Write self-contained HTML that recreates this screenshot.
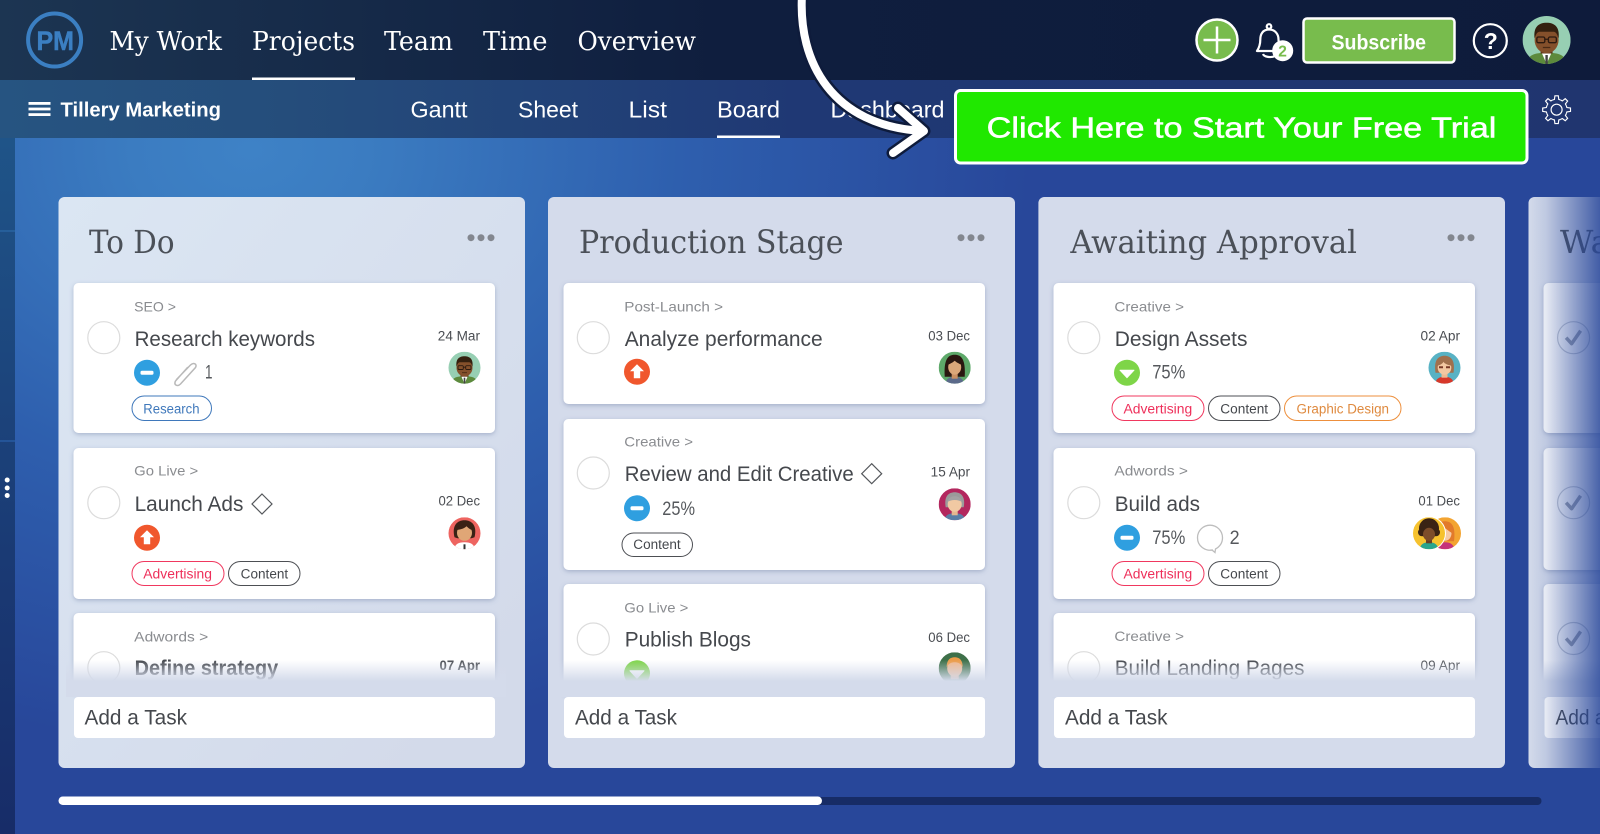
<!DOCTYPE html>
<html><head><meta charset="utf-8"><title>Board</title>
<style>
html,body{margin:0;padding:0;background:#28479a;width:1600px;height:834px;overflow:hidden}
svg{display:block}
text{font-family:"Liberation Sans",sans-serif}
.n{font-family:"DejaVu Serif","Liberation Serif",serif;font-size:26px;fill:#fff}
.s{font-size:23px;fill:#fff}
.h{font-family:"DejaVu Serif","Liberation Serif",serif;font-size:31.500px;fill:#4b5058}
.p{font-size:14px;fill:#8a8c90}
.t{font-size:21px;fill:#45484d}
.d{font-size:13.5px;fill:#4a4d52}
.k{font-size:19px;fill:#55585c}
.g{font-size:13.5px}
.a{font-size:21.5px;fill:#45484d}
.c{fill:none;stroke:#dcdcdc;stroke-width:1.2}
.card{fill:#fff;filter:url(#sh)}
</style></head><body>
<svg xmlns="http://www.w3.org/2000/svg" width="1600" height="834" viewBox="0 0 1600 834">
<defs>
<radialGradient id="bg" gradientUnits="userSpaceOnUse" cx="250" cy="150" r="600" gradientTransform="translate(250 150) scale(1.3 1) translate(-250 -150)"><stop offset="0" stop-color="#3e82c6"/><stop offset=".15" stop-color="#3b7cc1"/><stop offset=".55" stop-color="#2e5fae"/><stop offset="1" stop-color="#28479a"/></radialGradient>
<linearGradient id="hd" x1="0" x2="1" y1="0" y2="0"><stop offset="0" stop-color="#1c3552"/><stop offset=".45" stop-color="#0f1e3e"/><stop offset="1" stop-color="#0e1b3b"/></linearGradient>
<linearGradient id="sb" x1="0" x2="1" y1="0" y2="0"><stop offset="0" stop-color="#265481"/><stop offset=".18" stop-color="#254d7b"/><stop offset=".5" stop-color="#1f3874"/><stop offset="1" stop-color="#20356f"/></linearGradient>
<linearGradient id="st" x1="0" x2="0" y1="0" y2="1"><stop offset="0" stop-color="#1f5488"/><stop offset=".6" stop-color="#1a3a74"/><stop offset="1" stop-color="#172c68"/></linearGradient>
<linearGradient id="col" gradientUnits="userSpaceOnUse" x1="60" y1="197" x2="560" y2="600"><stop offset="0" stop-color="#dbe6f3"/><stop offset="1" stop-color="#d3daea"/></linearGradient>
<linearGradient id="fade" x1="0" x2="0" y1="0" y2="1"><stop offset="0" stop-color="#d4dbeb" stop-opacity="0"/><stop offset="1" stop-color="#d4dbeb"/></linearGradient>
<linearGradient id="ov" x1="0" x2="1" y1="0" y2="0"><stop offset="0" stop-color="#28479a" stop-opacity="0"/><stop offset=".25" stop-color="#28479a" stop-opacity=".12"/><stop offset="1" stop-color="#28479a" stop-opacity=".85"/></linearGradient>
<filter id="sh" x="-5%" y="-10%" width="110%" height="125%"><feDropShadow dx="0" dy="1.5" stdDeviation="2.5" flood-color="#5d6e98" flood-opacity=".4"/></filter>
<clipPath id="ci"><circle r="16"/></clipPath>

<g id="bm"><circle r="13" fill="#2f9fe0"/><rect x="-6.5" y="-2" width="13" height="4" rx="1.5" fill="#fff"/></g>
<g id="ru"><circle r="13" fill="#f0572d"/><path d="M0-7.5L7-.5H3.2V6.5H-3.2V-.5H-7Z" fill="#fff"/></g>
<g id="gd"><circle r="13" fill="#7ed548"/><path d="M-7-2.5H7L0 5Z" fill="#fff" stroke="#fff" stroke-linejoin="round"/></g>

<g id="av1" clip-path="url(#ci)"><rect x="-16" y="-16" width="32" height="32" fill="#97cfb3"/><path d="M-13 16c0-6 5-7.500 13-7.500s13 1.500 13 7.500z" fill="#5d8a3c"/><path d="M-3.500 8L0 16 3.500 8z" fill="#fff"/><rect x="-.8" y="10" width="1.600" height="6" fill="#444"/><rect x="-4" y="3" width="8" height="6" fill="#5e371d"/><ellipse cy="0" rx="8" ry="8.800" fill="#84502b"/><path d="M-8-1C-9-9-5-11.500 0-11.500S9-9 8-1C7-4 6.500-5 5-5.500H-5C-6.500-5-7-4-8-1z" fill="#34200f"/><g fill="none" stroke="#2c1a10" stroke-width=".9"><rect x="-6.500" y="-2" width="5.300" height="3.800" rx="1"/><rect x="1.200" y="-2" width="5.300" height="3.800" rx="1"/><path d="M-1.200-.5H1.200"/></g><path d="M-2.500 5h5" stroke="#4a2a15" stroke-width=".8"/></g>
<g id="av2" clip-path="url(#ci)"><rect x="-16" y="-16" width="32" height="32" fill="#ee6460"/><path d="M-10 16c0-5 4-7 10-7s10 2 10 7z" fill="#fff"/><path d="M-10 4C-13-8-7-13 0-13S13-8 10 4L7 5H-7z" fill="#3a2115"/><ellipse cy="-.5" rx="7.500" ry="8" fill="#e0a676"/><path d="M-8-3C-7-8-3-9 0-9S7-8 8-3C5-4 3-6 2-7-1-4-5-4-8-3z" fill="#3a2115"/><rect x="-1" y="11" width="2" height="5" fill="#333"/></g>
<g id="av3" clip-path="url(#ci)"><rect x="-16" y="-16" width="32" height="32" fill="#5ea96a"/><path d="M-10 9C-11-8-7-13 0-13S11-8 10 9z" fill="#2a1710"/><path d="M-9 16c0-5 4-7 9-7s9 2 9 7z" fill="#5b6a8a"/><rect x="-3" y="4" width="6" height="7" fill="#c98f62"/><ellipse cy="-.5" rx="6.500" ry="7.500" fill="#dba779"/><path d="M-7-3C-6-8-2-9 0-9S6-8 7-3C4-4 1-6 0-7-1-6-4-4-7-3z" fill="#2a1710"/></g>
<g id="av4" clip-path="url(#ci)"><rect x="-16" y="-16" width="32" height="32" fill="#b3275e"/><path d="M-10 16c0-5 4-7 10-7s10 2 10 7z" fill="#5a7ea6"/><rect x="-3" y="4" width="6" height="7" fill="#e7b78f"/><path d="M-9 3C-11-8-6-12 0-12S11-8 9 3z" fill="#9b9b9b"/><ellipse cy="0" rx="7" ry="7.500" fill="#f1c9a3"/><path d="M-7.500-2C-6-7-3-8 0-8S6-7 7.500-2C4-5-4-5-7.500-2z" fill="#a3a3a3"/></g>
<g id="av5" clip-path="url(#ci)"><rect x="-16" y="-16" width="32" height="32" fill="#58b2c4"/><path d="M-9 16c0-5 4-7 9-7s9 2 9 7z" fill="#d7382a"/><rect x="-3" y="4" width="6" height="6" fill="#eeba92"/><path d="M-9 5C-11-8-6-12 0-12S11-8 9 5z" fill="#a1704d"/><ellipse cy="0" rx="6.800" ry="7" fill="#f3c7a1"/><path d="M-7-2C-6-7-2-8 0-8S6-7 7-2C3-3 0-4-1-6-2-4-4-3-7-2z" fill="#a1704d"/><path d="M-5.500-.5h4M1.500-.5h4" stroke="#7a3a28" stroke-width="2"/></g>
<g id="av6" clip-path="url(#ci)"><rect x="-16" y="-16" width="32" height="32" fill="#3e7049"/><rect x="-4" y="4" width="8" height="7" fill="#e5a97c"/><ellipse cy="0" rx="7.500" ry="8.500" fill="#f1b78c"/><path d="M-8-1C-8-9-4-11 0-11S8-9 8-1C6-5 3-6 0-6S-6-5-8-1z" fill="#ec9c48"/></g>
<g id="av7" clip-path="url(#ci)"><rect x="-16" y="-16" width="32" height="32" fill="#f6c22e"/><path d="M-9 16c0-5 4-7 9-7s9 2 9 7z" fill="#29a58c"/><circle cy="-5" r="10" fill="#3a2314"/><circle cx="-7" cy="-1" r="4" fill="#3a2314"/><circle cx="7" cy="-1" r="4" fill="#3a2314"/><rect x="-3" y="3" width="6" height="7" fill="#6b3f22"/><ellipse cy="1" rx="6" ry="6.500" fill="#7d4d2a"/></g>
<g id="av8" clip-path="url(#ci)"><rect x="-16" y="-16" width="32" height="32" fill="#f3a431"/><path d="M-9 16c0-5 4-7 9-7s9 2 9 7z" fill="#c5347a"/><path d="M-9 8C-11-8-6-12 0-12S11-8 9 8z" fill="#e27a2b"/><ellipse cy="0" rx="6.500" ry="7.500" fill="#f6cba6"/><path d="M-7-2C-6-8-2-8 0-8S6-7 7 0C3-3 0-5-1-6-3-4-5-3-7-2z" fill="#e27a2b"/></g>
<g id="ck"><circle r="16" fill="none" stroke="#c6cbd4" stroke-width="1.2"/><path d="M-7.500 0L-2 6 7-7" fill="none" stroke="#9aa0ad" stroke-width="3.500" stroke-linejoin="round"/></g>
<path id="to" d="M-4.020-9.700L-2.180-10.270-1.700-13.900H1.700L2.180-10.270 4.020-9.700"/>
</defs>

<rect width="1600" height="834" fill="url(#bg)"/>
<rect y="138" width="15" height="696" fill="url(#st)"/>
<rect y="230.500" width="15" height="1" fill="#2f6fb0"/><rect y="440.500" width="15" height="1" fill="#2d68b6"/>
<circle cx="7.200" cy="480" r="2.500" fill="#fff"/><circle cx="7.200" cy="488" r="2.500" fill="#fff"/><circle cx="7.200" cy="495.500" r="2.500" fill="#fff"/>

<!-- header -->
<rect width="1600" height="80" fill="url(#hd)"/>
<circle cx="54.600" cy="40" r="26.500" fill="none" stroke="#3b7fc2" stroke-width="4"/>
<text x="36.500" y="50" font-size="27" font-weight="bold" fill="#3b7fc2" stroke="#3b7fc2" stroke-width=".5" textLength="37.500" lengthAdjust="spacingAndGlyphs">PM</text>
<text class="n" x="109.500" y="50" textLength="112.500" lengthAdjust="spacingAndGlyphs">My Work</text>
<text class="n" x="252" y="50" textLength="103" lengthAdjust="spacingAndGlyphs">Projects</text>
<text class="n" x="384" y="50" textLength="69" lengthAdjust="spacingAndGlyphs">Team</text>
<text class="n" x="483" y="50" textLength="64.500" lengthAdjust="spacingAndGlyphs">Time</text>
<text class="n" x="577.500" y="50" textLength="118.500" lengthAdjust="spacingAndGlyphs">Overview</text>
<rect x="252" y="77.500" width="103" height="2.500" fill="#fff"/>

<circle cx="1217" cy="40" r="20.500" fill="#78bc4d" stroke="#fff" stroke-width="2.500"/>
<path d="M1203.500 40h27M1217 26.500v27" stroke="#fff" stroke-width="2.500"/>
<g fill="none" stroke="#fff" stroke-width="2.200" stroke-linejoin="round">
<path d="M1269 29.500c-6 0-8.700 4.500-8.700 10 0 5-1 8-3.300 11.500h25c-2.300-3.500-3.500-6.500-3.500-11.500 0-5.500-3.500-10-9.500-10z"/>
<circle cx="1269" cy="26.500" r="2.300"/><path d="M1263 54c1 3 8 4 12 2"/></g>
<circle cx="1282.700" cy="50.700" r="10.500" fill="#fff"/>
<text x="1278.300" y="56.300" font-size="15.500" font-weight="bold" fill="#78bc4d">2</text>
<rect x="1303.500" y="18.500" width="151" height="44" rx="3.500" fill="#78bc4d" stroke="#fff" stroke-width="2.500"/>
<text x="1331.500" y="49.300" font-size="21.500" font-weight="bold" fill="#fff" textLength="94.500" lengthAdjust="spacingAndGlyphs">Subscribe</text>
<circle cx="1490.300" cy="40.700" r="16.500" fill="none" stroke="#fff" stroke-width="2.200"/>
<text x="1483.700" y="49" font-size="23" font-weight="bold" fill="#fff">?</text>
<g transform="translate(1546.600 40) scale(1.500)"><use href="#av1"/></g>

<!-- subnav -->
<rect y="80" width="1600" height="58" fill="url(#sb)"/>
<rect x="28.500" y="102" width="22" height="2.800" fill="#fff"/><rect x="28.500" y="107.600" width="22" height="2.800" fill="#fff"/><rect x="28.500" y="113.200" width="22" height="2.800" fill="#fff"/>
<text x="60.500" y="116.500" font-size="20.500" font-weight="bold" fill="#fff" textLength="160.500" lengthAdjust="spacingAndGlyphs">Tillery Marketing</text>
<text class="s" x="410.500" y="117.300" textLength="57" lengthAdjust="spacingAndGlyphs">Gantt</text>
<text class="s" x="518" y="117.300" textLength="60" lengthAdjust="spacingAndGlyphs">Sheet</text>
<text class="s" x="628.500" y="117.300" textLength="38.500" lengthAdjust="spacingAndGlyphs">List</text>
<text class="s" x="717" y="117.300" textLength="63" lengthAdjust="spacingAndGlyphs">Board</text>
<rect x="717" y="135.500" width="63" height="2.500" fill="#fff"/>
<text class="s" x="830.500" y="117.300" textLength="114" lengthAdjust="spacingAndGlyphs">Dashboard</text>
<g transform="translate(1556.600 109.700)" fill="none" stroke="#fff" stroke-width="1.150"><circle r="5.500"/>
<use href="#to"/><use href="#to" transform="rotate(45)"/><use href="#to" transform="rotate(90)"/><use href="#to" transform="rotate(135)"/><use href="#to" transform="rotate(180)"/><use href="#to" transform="rotate(225)"/><use href="#to" transform="rotate(270)"/><use href="#to" transform="rotate(315)"/></g>

<!-- column 1 -->
<rect x="58.500" y="197" width="466.500" height="571" rx="6" fill="url(#col)"/>
<text class="h" x="89" y="253" textLength="85.500" lengthAdjust="spacingAndGlyphs">To Do</text>
<g fill="#83878f"><circle cx="471" cy="237.700" r="3.500"/><circle cx="481" cy="237.700" r="3.500"/><circle cx="491" cy="237.700" r="3.500"/></g>

<rect class="card" x="73.500" y="283" width="421.500" height="150" rx="5"/>
<text class="p" x="134.200" y="311.700" textLength="41.800" lengthAdjust="spacingAndGlyphs">SEO &gt;</text>
<circle class="c" cx="103.800" cy="337.700" r="16"/>
<text class="t" x="134.600" y="346" textLength="180.400" lengthAdjust="spacingAndGlyphs">Research keywords</text>
<text class="d" x="437.800" y="340.700" textLength="42.200" lengthAdjust="spacingAndGlyphs">24 Mar</text>
<use href="#av1" x="464.500" y="367.700"/>
<use href="#bm" x="147" y="372.700"/>
<path d="M176.500 378.500l14-14.500c3-3 7-1 5 2.500l-15 16.500c-3 3-7 1-5-3l12-13.500" fill="none" stroke="#b9b9b9" stroke-width="1.500" stroke-linecap="round" transform="translate(0 1)"/>
<text class="k" x="205" y="378.700" textLength="7.500" lengthAdjust="spacingAndGlyphs">1</text>
<rect x="132" y="396" width="79.500" height="24.500" rx="12.250" fill="#fff" stroke="#3f78bb" stroke-width="1"/>
<text class="g" x="143.300" y="413.300" fill="#3f78bb" textLength="56.200" lengthAdjust="spacingAndGlyphs">Research</text>

<rect class="card" x="73.500" y="448" width="421.500" height="151" rx="5"/>
<text class="p" x="134.200" y="475.700" textLength="64" lengthAdjust="spacingAndGlyphs">Go Live &gt;</text>
<circle class="c" cx="103.800" cy="502.700" r="16"/>
<text class="t" x="134.600" y="511" textLength="108.800" lengthAdjust="spacingAndGlyphs">Launch Ads</text>
<path d="M262 494l10 10-10 10-10-10z" fill="none" stroke="#55585c" stroke-width="1.200"/>
<text class="d" x="438.500" y="505.300" textLength="41.500" lengthAdjust="spacingAndGlyphs">02 Dec</text>
<use href="#av2" x="464.500" y="533.300"/>
<use href="#ru" x="147" y="537.700"/>
<rect x="132" y="561.500" width="92" height="24" rx="12" fill="#fff" stroke="#f0385f" stroke-width="1"/>
<text class="g" x="143.300" y="578.300" fill="#ee2f5a" textLength="68.700" lengthAdjust="spacingAndGlyphs">Advertising</text>
<rect x="228.500" y="561.500" width="71.500" height="24" rx="12" fill="#fff" stroke="#4d4f54" stroke-width="1"/>
<text class="g" x="240.700" y="578.300" fill="#45484d" textLength="47.500" lengthAdjust="spacingAndGlyphs">Content</text>

<rect class="card" x="73.500" y="613" width="421.500" height="80" rx="5"/>
<text class="p" x="134.200" y="641.700" textLength="74" lengthAdjust="spacingAndGlyphs">Adwords &gt;</text>
<circle class="c" cx="103.800" cy="667.700" r="16"/>
<text class="t" x="134.600" y="675" font-weight="bold" textLength="143.600" lengthAdjust="spacingAndGlyphs">Define strategy</text>
<text class="d" x="439.500" y="670" font-weight="bold" textLength="40.500" lengthAdjust="spacingAndGlyphs">07 Apr</text>
<rect x="66" y="660" width="440" height="21" fill="url(#fade)"/><rect x="66" y="681" width="440" height="16" fill="#d4dbeb"/>
<rect x="74" y="697" width="421" height="41" rx="4" fill="#fff"/>
<text class="a" x="84.500" y="724.700" textLength="102.500" lengthAdjust="spacingAndGlyphs">Add a Task</text>

<!-- column 2 -->
<rect x="548" y="197" width="467" height="571" rx="6" fill="#d4dbeb"/>
<text class="h" x="579" y="253" textLength="264.500" lengthAdjust="spacingAndGlyphs">Production Stage</text>
<g fill="#83878f"><circle cx="961" cy="237.700" r="3.500"/><circle cx="971" cy="237.700" r="3.500"/><circle cx="981" cy="237.700" r="3.500"/></g>

<rect class="card" x="563.500" y="283" width="421.500" height="121" rx="5"/>
<text class="p" x="624.300" y="311.700" textLength="98.700" lengthAdjust="spacingAndGlyphs">Post-Launch &gt;</text>
<circle class="c" cx="593.300" cy="337.700" r="16"/>
<text class="t" x="624.700" y="346" textLength="198" lengthAdjust="spacingAndGlyphs">Analyze performance</text>
<text class="d" x="928.300" y="340.700" textLength="41.700" lengthAdjust="spacingAndGlyphs">03 Dec</text>
<use href="#av3" x="954.700" y="367.700"/>
<use href="#ru" x="637" y="371.700"/>

<rect class="card" x="563.500" y="419" width="421.500" height="151" rx="5"/>
<text class="p" x="624.300" y="446.700" textLength="68.700" lengthAdjust="spacingAndGlyphs">Creative &gt;</text>
<circle class="c" cx="593.300" cy="473" r="16"/>
<text class="t" x="624.700" y="481" textLength="229" lengthAdjust="spacingAndGlyphs">Review and Edit Creative</text>
<path d="M871.700 463.700l10 10-10 10-10-10z" fill="none" stroke="#55585c" stroke-width="1.200"/>
<text class="d" x="930.700" y="476.300" textLength="39.300" lengthAdjust="spacingAndGlyphs">15 Apr</text>
<use href="#av4" x="954.700" y="504.300"/>
<use href="#bm" x="637" y="508.300"/>
<text class="k" x="662.300" y="515" textLength="32.700" lengthAdjust="spacingAndGlyphs">25%</text>
<rect x="622" y="533" width="70.500" height="23.500" rx="11.750" fill="#fff" stroke="#4d4f54" stroke-width="1"/>
<text class="g" x="633.300" y="549" fill="#45484d" textLength="47.400" lengthAdjust="spacingAndGlyphs">Content</text>

<rect class="card" x="563.500" y="584" width="421.500" height="110" rx="5"/>
<text class="p" x="624.300" y="612.300" textLength="64" lengthAdjust="spacingAndGlyphs">Go Live &gt;</text>
<circle class="c" cx="593.300" cy="639" r="16"/>
<text class="t" x="624.700" y="646.700" textLength="126.300" lengthAdjust="spacingAndGlyphs">Publish Blogs</text>
<text class="d" x="928.300" y="642" textLength="41.700" lengthAdjust="spacingAndGlyphs">06 Dec</text>
<use href="#av6" x="954.700" y="668.300"/>
<use href="#gd" x="637" y="673.300"/>
<rect x="556" y="660" width="440" height="21" fill="url(#fade)"/><rect x="556" y="681" width="440" height="16" fill="#d4dbeb"/>
<rect x="564" y="697" width="421" height="41" rx="4" fill="#fff"/>
<text class="a" x="575" y="724.700" textLength="102" lengthAdjust="spacingAndGlyphs">Add a Task</text>

<!-- column 3 -->
<rect x="1038.400" y="197" width="466.600" height="571" rx="6" fill="#d4dbeb"/>
<text class="h" x="1070.400" y="253" textLength="286.600" lengthAdjust="spacingAndGlyphs">Awaiting Approval</text>
<g fill="#83878f"><circle cx="1451" cy="237.700" r="3.500"/><circle cx="1461" cy="237.700" r="3.500"/><circle cx="1471" cy="237.700" r="3.500"/></g>

<rect class="card" x="1053.500" y="283" width="421.500" height="150" rx="5"/>
<text class="p" x="1114.400" y="311.700" textLength="69.600" lengthAdjust="spacingAndGlyphs">Creative &gt;</text>
<circle class="c" cx="1083.800" cy="337.700" r="16"/>
<text class="t" x="1114.700" y="346" textLength="132.800" lengthAdjust="spacingAndGlyphs">Design Assets</text>
<text class="d" x="1420.500" y="340.700" textLength="39.500" lengthAdjust="spacingAndGlyphs">02 Apr</text>
<use href="#av5" x="1444.500" y="367.700"/>
<use href="#gd" x="1127" y="372.700"/>
<text class="k" x="1152.200" y="378.700" textLength="33.100" lengthAdjust="spacingAndGlyphs">75%</text>
<rect x="1112" y="396" width="92" height="24.500" rx="12.250" fill="#fff" stroke="#f0385f" stroke-width="1"/>
<text class="g" x="1123.500" y="413.300" fill="#ee2f5a" textLength="68.700" lengthAdjust="spacingAndGlyphs">Advertising</text>
<rect x="1208.500" y="396" width="71.500" height="24.500" rx="12.250" fill="#fff" stroke="#4d4f54" stroke-width="1"/>
<text class="g" x="1220.300" y="413.300" fill="#45484d" textLength="47.800" lengthAdjust="spacingAndGlyphs">Content</text>
<rect x="1284.500" y="396" width="116.500" height="24.500" rx="12.250" fill="#fff" stroke="#ed8f3c" stroke-width="1"/>
<text class="g" x="1296.500" y="413.300" fill="#df8a3f" textLength="92.500" lengthAdjust="spacingAndGlyphs">Graphic Design</text>

<rect class="card" x="1053.500" y="448" width="421.500" height="151" rx="5"/>
<text class="p" x="1114.400" y="475.700" textLength="73.600" lengthAdjust="spacingAndGlyphs">Adwords &gt;</text>
<circle class="c" cx="1083.800" cy="502.700" r="16"/>
<text class="t" x="1114.700" y="511" textLength="85.300" lengthAdjust="spacingAndGlyphs">Build ads</text>
<text class="d" x="1418.400" y="505.300" textLength="41.600" lengthAdjust="spacingAndGlyphs">01 Dec</text>
<use href="#av8" x="1445" y="533.300"/>
<circle cx="1429" cy="533.300" r="17" fill="#fff"/>
<use href="#av7" x="1429" y="533.300"/>
<use href="#bm" x="1127" y="537.700"/>
<text class="k" x="1152.200" y="544" textLength="33.100" lengthAdjust="spacingAndGlyphs">75%</text>
<path d="M1213 550c-8 1.500-15.500-4-15.500-12.300 0-7 5.700-12.500 12.500-12.500s12.500 5.500 12.500 12.500c0 5-3 9-7 11.300l-.5 3.500-3-2.500z" fill="none" stroke="#bdbdbd" stroke-width="1.300"/>
<text class="k" x="1229.600" y="544" textLength="10" lengthAdjust="spacingAndGlyphs">2</text>
<rect x="1112" y="561.500" width="92" height="24" rx="12" fill="#fff" stroke="#f0385f" stroke-width="1"/>
<text class="g" x="1123.500" y="578.300" fill="#ee2f5a" textLength="68.700" lengthAdjust="spacingAndGlyphs">Advertising</text>
<rect x="1208.500" y="561.500" width="71.500" height="24" rx="12" fill="#fff" stroke="#4d4f54" stroke-width="1"/>
<text class="g" x="1220.300" y="578.300" fill="#45484d" textLength="47.800" lengthAdjust="spacingAndGlyphs">Content</text>

<rect class="card" x="1053.500" y="613" width="421.500" height="80" rx="5"/>
<text class="p" x="1114.400" y="641" textLength="69.600" lengthAdjust="spacingAndGlyphs">Creative &gt;</text>
<circle class="c" cx="1083.800" cy="667.700" r="16"/>
<text class="t" x="1114.700" y="675" textLength="189.800" lengthAdjust="spacingAndGlyphs">Build Landing Pages</text>
<text class="d" x="1420.500" y="670" textLength="39.500" lengthAdjust="spacingAndGlyphs">09 Apr</text>
<rect x="1046" y="660" width="440" height="21" fill="url(#fade)"/><rect x="1046" y="681" width="440" height="16" fill="#d4dbeb"/>
<rect x="1054" y="697" width="421" height="41" rx="4" fill="#fff"/>
<text class="a" x="1065" y="724.700" textLength="102.500" lengthAdjust="spacingAndGlyphs">Add a Task</text>

<!-- column 4 -->
<rect x="1528.500" y="197" width="100" height="571" rx="6" fill="#d4dbeb"/>
<text class="h" x="1560" y="253" textLength="50" lengthAdjust="spacingAndGlyphs">Wa</text>
<rect class="card" x="1543.500" y="283" width="100" height="150" rx="5"/>
<use href="#ck" x="1573.600" y="337.700"/>
<rect class="card" x="1543.500" y="448" width="100" height="122" rx="5"/>
<use href="#ck" x="1573.600" y="502.700"/>
<rect class="card" x="1543.500" y="584" width="100" height="110" rx="5"/>
<use href="#ck" x="1573.600" y="638.500"/>
<rect x="1536" y="660" width="64" height="21" fill="url(#fade)"/><rect x="1536" y="681" width="64" height="16" fill="#d4dbeb"/>
<rect x="1544.500" y="697" width="100" height="41" rx="4" fill="#fff"/>
<text class="a" x="1555.500" y="724.700" textLength="50" lengthAdjust="spacingAndGlyphs">Add a</text>
<rect x="1528" y="197" width="72" height="571" fill="url(#ov)"/>

<!-- scrollbar -->
<rect x="58.500" y="797" width="1483" height="8" rx="4" fill="#172c66"/>
<rect x="58.500" y="796.500" width="763.500" height="8.500" rx="4.250" fill="#fff"/>

<!-- arrow -->
<g fill="none" stroke-linecap="round" stroke-linejoin="round">
<path d="M802 -5C798 62 832 126 923 131M898 108L924 131 893 153" stroke="#0e1b3b" stroke-width="13"/>
<path d="M802 -5C798 62 832 126 923 131M898 108L924 131 893 153" stroke="#fff" stroke-width="8"/>
</g>

<!-- CTA -->
<rect x="955.500" y="90.500" width="571.500" height="72.500" rx="5" fill="#20e800" stroke="#fff" stroke-width="3"/>
<text x="986.700" y="137.300" font-family="DejaVu Sans" font-size="29" fill="#fff" stroke="#fff" stroke-width=".5" textLength="509.700" lengthAdjust="spacingAndGlyphs">Click Here to Start Your Free Trial</text>
</svg>
</body></html>
